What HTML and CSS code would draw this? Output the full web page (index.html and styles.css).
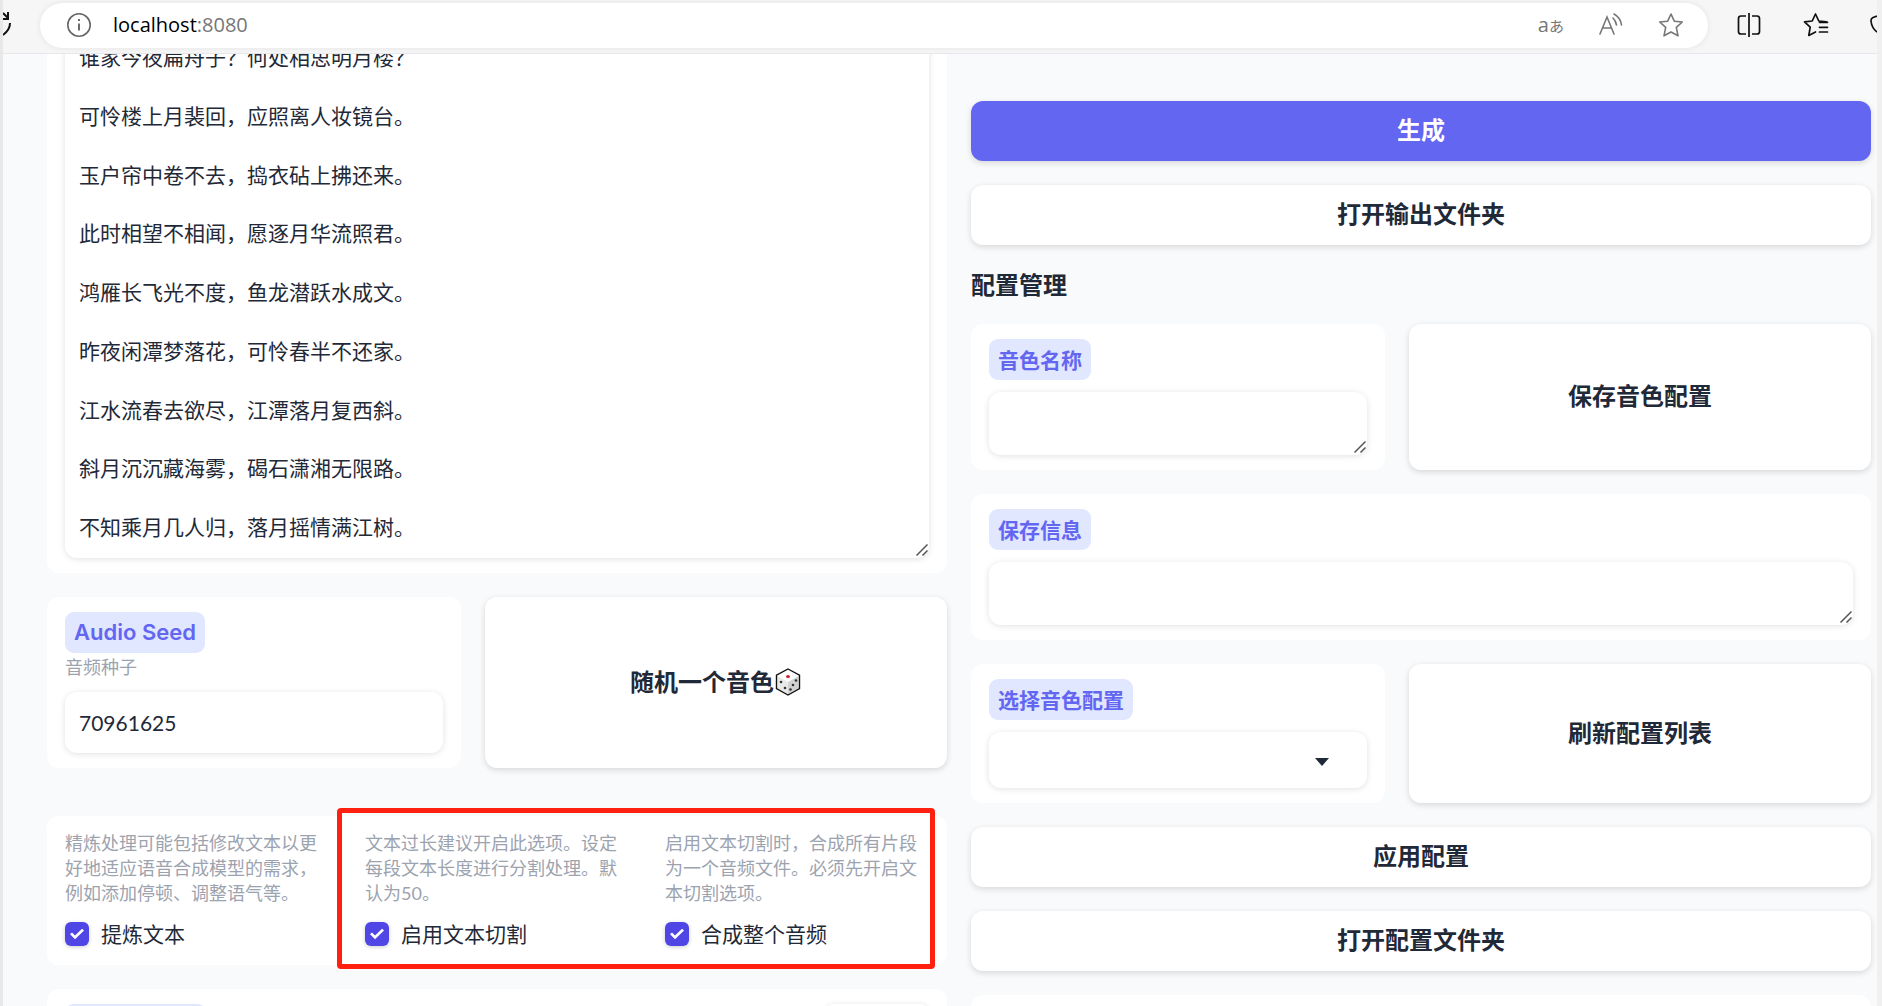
FILE: index.html
```html
<!DOCTYPE html>
<html lang="zh-CN">
<head>
<meta charset="utf-8">
<meta name="viewport" content="width=device-width, initial-scale=1">
<title>localhost:8080</title>
<link rel="stylesheet" href="styles.css">
</head>
<body>
<div class="window">
  <header class="toolbar">
    <svg class="reload" width="8" height="26" viewBox="0 0 8 26" fill="none" stroke="#111" stroke-width="2"><path d="M0 1L5 6M5 0V7H0"/><path d="M7 11C7 16 4 20 0 23"/></svg>
    <div class="address">
      <svg width="26" height="26" viewBox="0 0 26 26" fill="none" stroke="#666" stroke-width="1.6"><circle cx="13" cy="13" r="11.2"/><path d="M13 11.5V18.5M13 7V9" stroke-width="1.9"/></svg>
      <p class="url">localhost<span class="port">:8080</span></p>
      <div class="address-icons">
        <span class="translate">a<span class="kana">あ</span></span>
        <svg width="24" height="24" viewBox="0 0 24 24" fill="none" stroke="#767676" stroke-width="1.6" stroke-linecap="round"><path d="M1 21L8 4L15 21M3.600 15H12.400"/><path d="M14 5C16 7 17 9 17.500 12M15 1C19.500 3.500 22 7.500 22.500 12"/></svg>
        <svg width="26" height="26" viewBox="0 0 26 26" fill="none" stroke="#767676" stroke-width="1.6" stroke-linejoin="round"><path d="M13 2L16.300 9.200L24.300 10L18.300 15.400L20 23.800L13 20L6 23.800L7.700 15.400L1.700 10L9.700 9.200Z"/></svg>
      </div>
    </div>
    <svg class="split" width="24" height="26" viewBox="0 0 24 26" fill="none" stroke="#111" stroke-width="1.700"><path d="M9 4H4Q1.500 4 1.500 6.500V19.500Q1.500 22 4 22H9M15 4H20Q22.500 4 22.500 6.500V19.500Q22.500 22 20 22H15M12 1V25"/></svg>
    <svg class="favorites" width="26" height="26" viewBox="0 0 26 26" fill="none" stroke="#111" stroke-width="1.700" stroke-linejoin="round" stroke-linecap="round"><path d="M23.500 9.800L15.800 9L12.500 2L9.200 9L1.500 9.800L7.200 15.200L5.800 23.500L12.500 20"/><path d="M16.500 10.300H24.500M16.500 15.300H24.500M16.500 20H24.500"/></svg>
    <svg class="shield" width="7" height="26" viewBox="0 0 7 26" fill="none" stroke="#111" stroke-width="1.700"><path d="M7 4L3 5.500Q.8 6.500 1 9C1.400 13 3 17 7 20"/></svg>
  </header>

  <main class="page">
    <section class="column column-text">
      <div class="card">
        <div class="stack">
          <textarea class="field poem" aria-label="文本">谁家今夜扁舟子？何处相思明月楼？

可怜楼上月裴回，应照离人妆镜台。

玉户帘中卷不去，捣衣砧上拂还来。

此时相望不相闻，愿逐月华流照君。

鸿雁长飞光不度，鱼龙潜跃水成文。

昨夜闲潭梦落花，可怜春半不还家。

江水流春去欲尽，江潭落月复西斜。

斜月沉沉藏海雾，碣石潇湘无限路。

不知乘月几人归，落月摇情满江树。</textarea>
          <svg class="grip" width="12" height="12" viewBox="0 0 12 12" stroke="#555" stroke-width="1.500"><path d="M.5 11.500L11.500 .5M6.500 11.500L11.500 6.500"/></svg>
        </div>
      </div>

      <div class="row">
        <div class="card">
          <label class="chip chip-latin" for="seed">Audio Seed</label>
          <p class="hint seed-hint">音频种子</p>
          <input class="field seed" id="seed" type="text" value="70961625">
        </div>
        <button class="button" type="button">随机一个音色<svg class="dice" width="28" height="28" viewBox="0 0 28 28"><path d="M14 1L25.500 7.200V20.500L14 27L2.500 20.500V7.200Z" fill="#fff"/><path d="M14 14L24.500 8V20L14 26Z" fill="#d2d2d2"/><path d="M14 14L3.500 8V20L14 26Z" fill="#e9e9e9"/><path d="M14 1L25.500 7.200V20.500L14 27L2.500 20.500V7.200Z" fill="none" stroke="#111" stroke-width="1.400"/><ellipse cx="14" cy="8.500" rx="2" ry="1.500" fill="#d41f2c"/><g fill="#333"><circle cx="7" cy="14" r="1.300"/><circle cx="11" cy="20" r="1.300"/><circle cx="22" cy="12.500" r="1.300"/><circle cx="19" cy="17" r="1.300"/><circle cx="16.500" cy="21.500" r="1.300"/></g></svg></button>
      </div>

      <div class="options">
        <div class="card option">
          <p class="hint">精炼处理可能包括修改文本以更好地适应语音合成模型的需求，例如添加停顿、调整语气等。</p>
          <label class="check"><input type="checkbox" checked>提炼文本</label>
        </div>
        <div class="card option">
          <p class="hint">文本过长建议开启此选项。设定每段文本长度进行分割处理。默认为50。</p>
          <label class="check"><input type="checkbox" checked>启用文本切割</label>
        </div>
        <div class="card option">
          <p class="hint">启用文本切割时，合成所有片段为一个音频文件。必须先开启文本切割选项。</p>
          <label class="check"><input type="checkbox" checked>合成整个音频</label>
        </div>
        <div class="highlight"></div>
      </div>

      <div class="card next-setting">
        <div class="next-chip"></div>
        <div class="next-value"></div>
      </div>
    </section>

    <section class="column column-config">
      <button class="button button-primary" type="button">生成</button>
      <button class="button" type="button">打开输出文件夹</button>
      <h2 class="heading">配置管理</h2>
      <div class="row">
        <div class="card">
          <label class="chip" for="voice-name">音色名称</label>
          <div class="stack">
            <textarea class="field" id="voice-name"></textarea>
            <svg class="grip" width="12" height="12" viewBox="0 0 12 12" stroke="#555" stroke-width="1.500"><path d="M.5 11.500L11.500 .5M6.500 11.500L11.500 6.500"/></svg>
          </div>
        </div>
        <button class="button" type="button">保存音色配置</button>
      </div>
      <div class="card">
        <label class="chip" for="save-info">保存信息</label>
        <div class="stack">
          <textarea class="field" id="save-info"></textarea>
          <svg class="grip" width="12" height="12" viewBox="0 0 12 12" stroke="#555" stroke-width="1.500"><path d="M.5 11.500L11.500 .5M6.500 11.500L11.500 6.500"/></svg>
        </div>
      </div>
      <div class="row">
        <div class="card">
          <label class="chip" for="voice-config">选择音色配置</label>
          <div class="stack">
            <select class="field picker" id="voice-config"><option value=""></option></select>
            <svg class="arrow" width="14" height="8" viewBox="0 0 14 8"><path d="M0 0H14L7 8Z" fill="#1f2937"/></svg>
          </div>
        </div>
        <button class="button" type="button">刷新配置列表</button>
      </div>
      <button class="button" type="button">应用配置</button>
      <button class="button" type="button">打开配置文件夹</button>
      <div class="card next-setting"></div>
    </section>
  </main>
</div>
</body>
</html>
```

FILE: styles.css
```css
* {
  box-sizing: border-box;
}

body {
  margin: 0;
  color: #1f2937;
  background: #f9fafc;
  font-family: Lato, "Noto Sans CJK SC", sans-serif;
}

p,
h2 {
  margin: 0;
}

svg {
  display: block;
  flex: none;
}

.window {
  display: flex;
  flex-direction: column;
  height: 100vh;
  overflow: hidden;
  border-left: 3px solid #e8e8e8;
  border-right: 5px solid #f0f0f0;
}

/* Browser toolbar */

.toolbar {
  display: flex;
  align-items: center;
  flex: none;
  height: 54px;
  padding-bottom: 3px;
  border-bottom: 1px solid #e5e7ea;
  background: #f6f6f6;
}

.address {
  display: flex;
  align-items: center;
  flex: 1;
  height: 45px;
  margin-left: 29px;
  padding: 0 24px 0 26px;
  border-radius: 23px;
  background: #fff;
  box-shadow: 0 0 6px rgba(0, 0, 0, 0.08);
}

.url {
  margin-left: 21px;
  color: #000;
  font: 20px/26px "Open Sans", "Noto Sans", sans-serif;
}

.port {
  color: #767676;
}

.address-icons {
  display: flex;
  align-items: center;
  gap: 35px;
  margin-left: auto;
}

.translate {
  color: #767676;
  font: 20px/24px "Open Sans", "Noto Sans", sans-serif;
}

.kana {
  font: 15px/24px "Noto Sans CJK JP", sans-serif;
}

.split {
  margin-left: 29px;
}

.favorites {
  margin-left: 42px;
}

.shield {
  margin-left: 41px;
}

/* Page columns */

.page {
  display: flex;
  align-items: flex-start;
  flex: 1;
  gap: 24px;
  min-height: 0;
  padding: 0 6px 0 44px;
  overflow: hidden;
}

.column {
  display: flex;
  flex: 1;
  flex-direction: column;
  gap: 24px;
  min-width: 0;
}

.column-text {
  margin-top: -41px;
}

.column-config {
  padding-top: 47px;
}

.row {
  display: grid;
  grid-template-columns: 414fr 462fr;
  gap: 24px;
}

.card {
  min-width: 0;
  padding: 15px 18px;
  border-radius: 12px;
  background: #fff;
}

.heading {
  font-size: 24px;
  font-weight: 700;
  line-height: 31px;
}

/* Form parts */

.chip {
  display: block;
  width: fit-content;
  margin-bottom: 12px;
  padding: 0 9px;
  border-radius: 9px;
  color: #6366f1;
  background: #e0e7ff;
  font-size: 21px;
  font-weight: 700;
  line-height: 41px;
}

.chip-latin {
  margin-bottom: 2px;
  font-family: Inter, sans-serif;
  font-size: 22px;
  font-weight: 600;
}

.hint {
  color: #9ca3af;
  font-size: 18px;
  line-height: 25px;
}

.seed-hint {
  margin-bottom: 12px;
}

.field {
  display: block;
  width: 100%;
  height: 63px;
  padding: 14px;
  border: 0;
  border-radius: 12px;
  color: #1f2937;
  background: #fff;
  box-shadow: 0 1px 6px rgba(0, 0, 0, 0.12);
  font: inherit;
  font-size: 21px;
  line-height: 1.4;
  resize: none;
}

.poem {
  height: 530px;
  overflow: hidden;
}

.seed {
  height: 61px;
}

/* A field with its marker laid over it in the same grid cell */
.stack {
  display: grid;
}

.stack > * {
  grid-area: 1 / 1;
}

.grip {
  place-self: end;
  margin: 0 1px 2px 0;
  pointer-events: none;
}

.picker {
  height: 56px;
  appearance: none;
}

.arrow {
  place-self: center end;
  margin: 4px 38px 0 0;
  pointer-events: none;
}

.button {
  display: flex;
  align-items: center;
  justify-content: center;
  min-height: 60px;
  padding: 0 18px 2px;
  border: 0;
  border-radius: 12px;
  color: #1f2937;
  background: #fff;
  box-shadow: 0 2px 6px rgba(0, 0, 0, 0.14);
  font: inherit;
  font-size: 24px;
  font-weight: 700;
  line-height: 30px;
}

.button-primary {
  color: #fff;
  background: #6366f1;
}

/* Option group */

.options {
  display: grid;
  position: relative;
  grid-template-columns: repeat(3, 1fr);
  margin-top: 24px;
  border-radius: 12px;
  background: #fff;
}

.check {
  display: flex;
  align-items: center;
  gap: 12px;
  margin-top: 12px;
  font-size: 21px;
  line-height: 32px;
}

.check input {
  display: grid;
  place-items: center;
  width: 24px;
  height: 24px;
  margin: 0;
  border-radius: 6px;
  appearance: none;
  background: #4f46e5;
  box-shadow: 0 1px 4px rgba(0, 0, 0, 0.2);
}

.check input::before {
  width: 14px;
  height: 12px;
  background: #fff;
  clip-path: polygon(0 52%, 14% 38%, 36% 62%, 86% 6%, 100% 20%, 36% 94%);
  content: "";
}

.highlight {
  position: absolute;
  inset: -8px 12px -4px 290px;
  border: 5px solid #ff2010;
  border-radius: 4px;
}

.next-setting {
  display: flex;
  justify-content: space-between;
  min-height: 90px;
}

.next-chip {
  width: 141px;
  height: 41px;
  border-radius: 9px;
  background: #e0e7ff;
}

.next-value {
  width: 104px;
  height: 41px;
  border-radius: 9px;
  background: #fff;
  box-shadow: 0 1px 6px rgba(0, 0, 0, 0.12);
}
```
